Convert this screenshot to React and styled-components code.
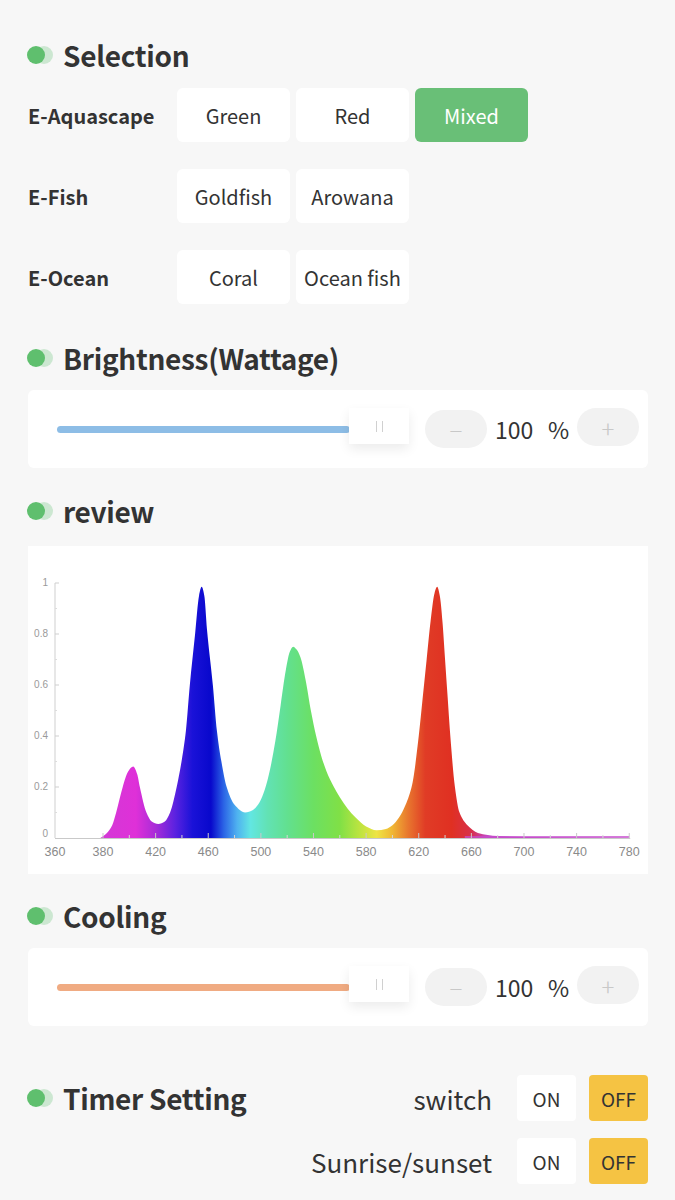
import React from "react";
import styled, { createGlobalStyle } from "styled-components";

const Global = createGlobalStyle`
  html, body { margin: 0; padding: 0; background: #f7f7f7; }
  body { font-family: "Noto Sans CJK SC", "Noto Sans", sans-serif; color: #333; }
`;

const Page = styled.div`
  padding: 37px 27px 20px 28px;
  width: 620px;
`;

const SectionHeader = styled.div`
  display: flex;
  align-items: center;
  height: 36px;
  margin-top: ${(p) => p.$mt || 0}px;
`;

const Dot = styled.span`
  position: relative;
  width: 28px;
  height: 18px;
  margin-right: 8px;
  margin-left: -1px;
  flex: none;
  &::before, &::after {
    content: "";
    position: absolute;
    top: 0;
    width: 18px;
    height: 18px;
    border-radius: 50%;
  }
  &::after { left: 8px; background: rgba(95, 191, 110, 0.28); }
  &::before { left: 0; background: #5fbf6e; z-index: 1; }
`;

const Title = styled.h2`
  margin: 0;
  font-size: 28px;
  font-weight: 700;
  line-height: 36px;
  color: #333;
  letter-spacing: -0.3px;
`;

const OptionGrid = styled.div`
  display: flex;
  flex-direction: column;
  gap: 27px;
  margin-top: 15px;
`;

const OptionRow = styled.div`
  display: flex;
  align-items: center;
`;

const RowLabel = styled.div`
  width: 149px;
  font-size: 20px;
  font-weight: 700;
  color: #333;
`;

const OptionButton = styled.div`
  width: 113px;
  height: 54px;
  margin-right: 6px;
  border-radius: 6px;
  display: flex;
  align-items: center;
  justify-content: center;
  font-size: 20px;
  background: ${(p) => (p.$active ? "#69bf77" : "#ffffff")};
  color: ${(p) => (p.$active ? "#ffffff" : "#333")};
`;

const SliderCard = styled.div`
  margin-top: 14px;
  height: 78px;
  background: #fff;
  border-radius: 6px;
  display: flex;
  align-items: center;
  padding: 0 9px 0 29px;
`;

const Track = styled.div`
  width: 293px;
  height: 7px;
  border-radius: 4px;
  background: ${(p) => p.$color};
`;

const Thumb = styled.div`
  width: 60px;
  height: 36px;
  margin-left: -1px;
  background: #fff;
  box-shadow: 0 5px 12px rgba(0, 0, 0, 0.08);
  display: flex;
  align-items: center;
  justify-content: center;
  gap: 5px;
  margin-top: -6px;
  & > i {
    display: block;
    width: 1px;
    height: 11px;
    background: #d0d0d0;
  }
`;

const RoundBtn = styled.div`
  width: 62px;
  height: 38px;
  border-radius: 19px;
  background: #f2f2f2;
  color: #c8c8c8;
  display: flex;
  align-items: center;
  justify-content: center;
  font-size: 24px;
  font-weight: 300;
  margin-left: ${(p) => p.$ml || 0}px;
  margin-top: ${(p) => p.$mt || 0}px;
`;

const Value = styled.span`
  font-size: 23px;
  color: #333;
  margin-left: 8px;
  width: 45px;
`;

const Unit = styled.span`
  font-size: 23px;
  color: #333;
  margin-left: 8px;
  width: 21px;
`;

const ChartCard = styled.div`
  margin-top: 17px;
  height: 328px;
  background: #fff;
  & > svg { display: block; }
`;

const TimerBlock = styled.div`
  margin-top: 49px;
  display: flex;
  align-items: flex-start;
  justify-content: space-between;
`;

const TimerHeader = styled(SectionHeader)`
  height: 46px;
`;

const ToggleColumn = styled.div`
  display: flex;
  flex-direction: column;
  gap: 17px;
`;

const ToggleRow = styled.div`
  display: flex;
  align-items: center;
  justify-content: flex-end;
  gap: 13px;
`;

const ToggleLabel = styled.span`
  font-size: 26px;
  color: #333;
  margin-right: 12px;
`;

const ToggleButton = styled.div`
  width: 59px;
  height: 46px;
  border-radius: 4px;
  display: flex;
  align-items: center;
  justify-content: center;
  font-size: 19px;
  font-weight: 400;
  color: #333;
  background: ${(p) => (p.$active ? "#f5c343" : "#ffffff")};
`;

/* ---------- chart ---------- */
const PTS = [
  [378, 0], [383, 0.02], [387, 0.05], [390, 0.1], [395, 0.2], [399, 0.26], [403, 0.28],
  [406, 0.25], [408, 0.2], [413, 0.1], [417, 0.065], [422, 0.055], [427, 0.065], [431, 0.1],
  [436, 0.2], [440, 0.31], [443, 0.42], [446, 0.6], [450, 0.8], [453, 0.95], [455, 0.985],
  [457, 0.95], [459, 0.82], [463.5, 0.6], [466.6, 0.42], [470, 0.3], [474, 0.2], [480, 0.13],
  [488, 0.1], [494, 0.11], [499, 0.14], [503, 0.19], [507, 0.27], [511, 0.38], [515, 0.52],
  [519, 0.66], [522, 0.73], [524.5, 0.75], [527, 0.74], [530, 0.71], [534, 0.62], [538, 0.5],
  [542, 0.4], [546, 0.32], [550, 0.26], [555, 0.205], [560, 0.16], [566, 0.115], [572, 0.08],
  [580, 0.045], [588, 0.03],
  [595, 0.035], [600, 0.05], [605, 0.08], [610, 0.13], [615, 0.21], [620, 0.4], [623, 0.55],
  [626, 0.7], [629, 0.85], [632, 0.96], [634, 0.985], [636, 0.95], [638, 0.85], [640, 0.7],
  [642, 0.55], [644, 0.4], [647.5, 0.2], [651, 0.1], [657, 0.05], [665, 0.02], [680, 0.008],
  [700, 0.004], [780, 0],
];

const X = (l) => 75 + (l - 380) * 1.3156;
const Y = (v) => 292 - v * 255;

function spectrumPath() {
  const n = PTS.length;
  const d = [];
  for (let i = 0; i < n - 1; i++) {
    d.push((PTS[i + 1][1] - PTS[i][1]) / (PTS[i + 1][0] - PTS[i][0]));
  }
  const m = new Array(n);
  m[0] = d[0];
  m[n - 1] = d[n - 2];
  for (let i = 1; i < n - 1; i++) {
    if (d[i - 1] * d[i] <= 0) m[i] = 0;
    else {
      const h0 = PTS[i][0] - PTS[i - 1][0];
      const h1 = PTS[i + 1][0] - PTS[i][0];
      const w1 = 2 * h1 + h0;
      const w2 = h1 + 2 * h0;
      m[i] = (w1 + w2) / (w1 / d[i - 1] + w2 / d[i]);
    }
  }
  let p = `M${X(PTS[0][0]).toFixed(2)},${Y(0).toFixed(2)}`;
  for (let i = 0; i < n - 1; i++) {
    const [x0, y0] = PTS[i];
    const [x1, y1] = PTS[i + 1];
    const h = x1 - x0;
    const c1x = x0 + h / 3, c1y = y0 + (m[i] * h) / 3;
    const c2x = x1 - h / 3, c2y = y1 - (m[i + 1] * h) / 3;
    p += ` C${X(c1x).toFixed(2)},${Y(Math.max(0, c1y)).toFixed(2)} ${X(c2x).toFixed(2)},${Y(Math.max(0, c2y)).toFixed(2)} ${X(x1).toFixed(2)},${Y(y1).toFixed(2)}`;
  }
  p += " Z";
  return p;
}

const STOPS = [
  [378, "#d33ad6"], [405, "#df30d8"], [420, "#a82cd8"], [435, "#5a22e0"], [448, "#1a12d8"],
  [462, "#0808cc"], [472, "#2c66e6"], [482, "#4fb2f0"], [492, "#62e6e2"], [505, "#62e2b4"],
  [520, "#62e090"], [540, "#6ce062"], [560, "#80e046"], [575, "#bce440"], [588, "#eee444"],
  [600, "#f0b634"], [612, "#e8762e"], [625, "#e03c26"], [645, "#e03022"], [660, "#d8304a"],
  [672, "#c448c4"], [780, "#c44ad0"],
];

const XTICKS = [380, 420, 460, 500, 540, 580, 620, 660, 700, 740, 780];

function Spectrum() {
  const x0 = 27;
  return (
    <svg width="620" height="328" viewBox="0 0 620 328">
      <defs>
        <linearGradient id="spec" gradientUnits="userSpaceOnUse" x1={X(378)} y1="0" x2={X(780)} y2="0">
          {STOPS.map(([l, c]) => (
            <stop key={l} offset={((l - 378) / (780 - 378)).toFixed(4)} stopColor={c} />
          ))}
        </linearGradient>
      </defs>
      <line x1={x0} y1={Y(1)} x2={x0} y2={292} stroke="#cfcfcf" strokeWidth="1" />
      {[0.2, 0.4, 0.6, 0.8, 1].map((v) => (
        <line key={v} x1={x0} y1={Y(v)} x2={x0 + 4} y2={Y(v)} stroke="#cfcfcf" strokeWidth="1" />
      ))}
      {[0.1, 0.3, 0.5, 0.7, 0.9].map((v) => (
        <line key={v} x1={x0} y1={Y(v)} x2={x0 + 2} y2={Y(v)} stroke="#dcdcdc" strokeWidth="1" />
      ))}
      {[0, 0.2, 0.4, 0.6, 0.8, 1].map((v) => (
        <text key={v} x="20" y={Y(v) + 3 - (v === 0 ? 4 : 0)} textAnchor="end" fontSize="10" fill="#9a9a9a" fontFamily="Liberation Sans, sans-serif">
          {v}
        </text>
      ))}
      <path d={spectrumPath()} fill="url(#spec)" />
      <line x1={X(655)} y1={291} x2={X(780)} y2={291} stroke="#c64ccc" strokeWidth="1.4" />
      <line x1={x0} y1={292.5} x2={X(780) + 1} y2={292.5} stroke="#c9c9c9" strokeWidth="1" />
      {XTICKS.map((l) => (
        <line key={l} x1={X(l)} y1={292} x2={X(l)} y2={287} stroke="#c9c9c9" strokeWidth="1" />
      ))}
      {XTICKS.slice(0, -1).map((l) => (
        <line key={"m" + l} x1={X(l + 20)} y1={292} x2={X(l + 20)} y2={289} stroke="#d6d6d6" strokeWidth="1" />
      ))}
      <text x={x0} y="310" textAnchor="middle" fontSize="12.5" fill="#8a8a8a" fontFamily="Liberation Sans, sans-serif">360</text>
      {XTICKS.map((l) => (
        <text key={"t" + l} x={X(l)} y="310" textAnchor="middle" fontSize="12.5" fill="#8a8a8a" fontFamily="Liberation Sans, sans-serif">
          {l}
        </text>
      ))}
    </svg>
  );
}

function Slider({ color }) {
  return (
    <SliderCard>
      <Track $color={color} />
      <Thumb>
        <i />
        <i />
      </Thumb>
      <RoundBtn $ml={16}>−</RoundBtn>
      <Value>100</Value>
      <Unit>%</Unit>
      <RoundBtn $ml={8} $mt={-4}>+</RoundBtn>
    </SliderCard>
  );
}

function Header({ children, mt }) {
  return (
    <SectionHeader $mt={mt}>
      <Dot />
      <Title>{children}</Title>
    </SectionHeader>
  );
}

const ROWS = [
  { label: "E-Aquascape", options: ["Green", "Red", "Mixed"], active: "Mixed" },
  { label: "E-Fish", options: ["Goldfish", "Arowana"] },
  { label: "E-Ocean", options: ["Coral", "Ocean fish"] },
];

export default function App() {
  return (
    <>
      <Global />
      <Page>
        <Header>Selection</Header>
        <OptionGrid>
          {ROWS.map((r) => (
            <OptionRow key={r.label}>
              <RowLabel>{r.label}</RowLabel>
              {r.options.map((o) => (
                <OptionButton key={o} $active={o === r.active}>
                  {o}
                </OptionButton>
              ))}
            </OptionRow>
          ))}
        </OptionGrid>

        <Header mt={36}>Brightness(Wattage)</Header>
        <Slider color="#8dbde6" />

        <Header mt={25}>review</Header>
        <ChartCard>
          <Spectrum />
        </ChartCard>

        <Header mt={24}>Cooling</Header>
        <Slider color="#f0ab82" />

        <TimerBlock>
          <TimerHeader>
            <Dot />
            <Title>Timer Setting</Title>
          </TimerHeader>
          <ToggleColumn>
            <ToggleRow>
              <ToggleLabel>switch</ToggleLabel>
              <ToggleButton>ON</ToggleButton>
              <ToggleButton $active>OFF</ToggleButton>
            </ToggleRow>
            <ToggleRow>
              <ToggleLabel>Sunrise/sunset</ToggleLabel>
              <ToggleButton>ON</ToggleButton>
              <ToggleButton $active>OFF</ToggleButton>
            </ToggleRow>
          </ToggleColumn>
        </TimerBlock>
      </Page>
    </>
  );
}
